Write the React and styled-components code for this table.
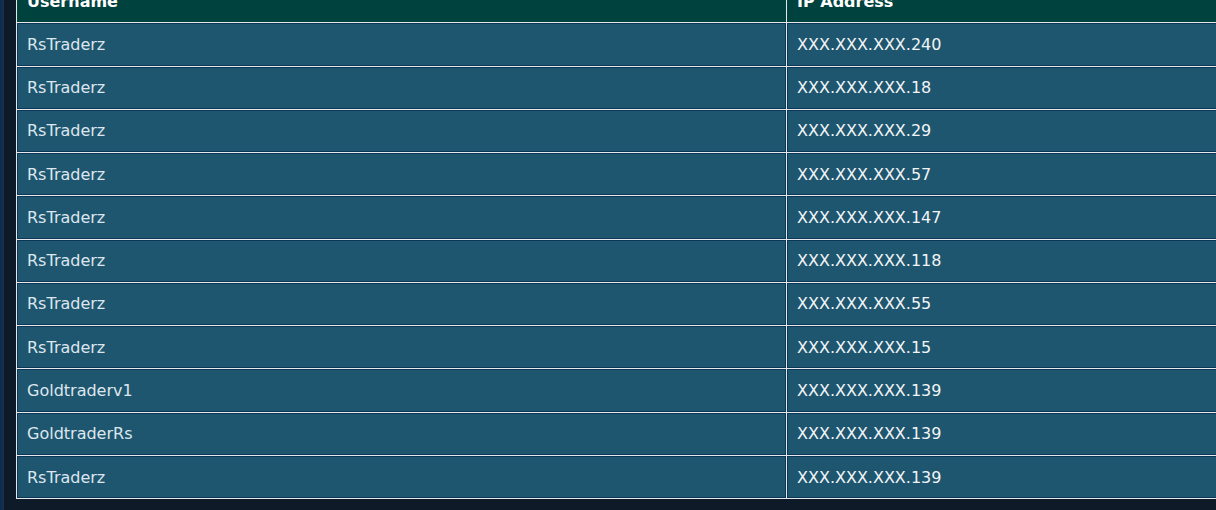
import styled, { createGlobalStyle } from 'styled-components';

const GlobalStyle = createGlobalStyle`
  html, body {
    margin: 0;
    padding: 0;
    height: 100%;
    overflow: hidden;
  }
  body {
    background: linear-gradient(to right, #0f2a48 0, #123257 4px, #0f1a29 4px);
    font-family: "DejaVu Sans", Verdana, sans-serif;
  }
`;

const rows = [
  { user: 'RsTraderz', ip: 'XXX.XXX.XXX.240' },
  { user: 'RsTraderz', ip: 'XXX.XXX.XXX.18' },
  { user: 'RsTraderz', ip: 'XXX.XXX.XXX.29' },
  { user: 'RsTraderz', ip: 'XXX.XXX.XXX.57' },
  { user: 'RsTraderz', ip: 'XXX.XXX.XXX.147' },
  { user: 'RsTraderz', ip: 'XXX.XXX.XXX.118' },
  { user: 'RsTraderz', ip: 'XXX.XXX.XXX.55' },
  { user: 'RsTraderz', ip: 'XXX.XXX.XXX.15' },
  { user: 'Goldtraderv1', ip: 'XXX.XXX.XXX.139' },
  { user: 'GoldtraderRs', ip: 'XXX.XXX.XXX.139' },
  { user: 'RsTraderz', ip: 'XXX.XXX.XXX.139' },
];

export default function App() {
  return (
    <>
      <GlobalStyle />
      <StyledPage>
        <StyledTable>
          <StyledHead>Username</StyledHead>
          <StyledHead>IP Address</StyledHead>
          {rows.map((r, i) => (
            <StyledRowPair key={i}>
              <StyledCell $muted>{r.user}</StyledCell>
              <StyledCell>{r.ip}</StyledCell>
            </StyledRowPair>
          ))}
        </StyledTable>
      </StyledPage>
    </>
  );
}

const StyledPage = styled.div`
  width: 1216px;
  height: 510px;
  overflow: hidden;
  padding-left: 16px;
  box-sizing: border-box;
`;

const StyledTable = styled.div`
  display: grid;
  grid-template-columns: 769px 620px;
  gap: 1px;
  padding: 1px;
  width: max-content;
  margin-top: -21px;
  background: #e6e9ec;
`;

const StyledRowPair = styled.div`
  display: contents;
`;

const StyledHead = styled.div`
  height: 42.27px;
  box-sizing: border-box;
  display: flex;
  align-items: center;
  padding: 0 10px;
  background: #00423d;
  color: #ffffff;
  font-weight: bold;
  font-size: 16px;
`;

const StyledCell = styled.div`
  height: 42.27px;
  box-sizing: border-box;
  display: flex;
  align-items: center;
  padding: 0 10px;
  background: #1f566f;
  box-shadow: inset 0 0 0 1px #0c3656;
  color: ${(p) => (p.$muted ? '#dde6ee' : '#f2f4f6')};
  font-size: 16px;
`;
